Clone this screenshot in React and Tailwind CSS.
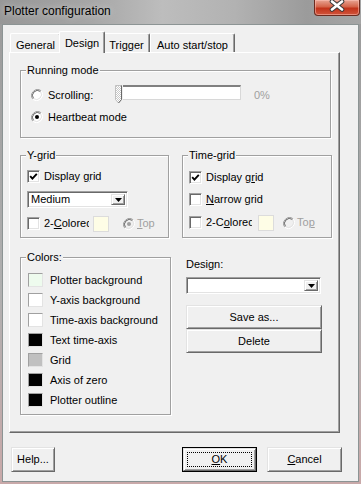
const raised =
  'bg-[#f0f0f0] border border-t-[#e3e3e3] border-l-[#e3e3e3] border-r-[#696969] border-b-[#696969] shadow-[inset_1px_1px_0_#fff,inset_-1px_-1px_0_#a0a0a0]';
const sunken =
  'border border-t-[#a0a0a0] border-l-[#a0a0a0] border-r-white border-b-white shadow-[inset_1px_1px_0_#696969,inset_-1px_-1px_0_#e3e3e3]';
const group = 'relative border border-[#a0a0a0] shadow-[1px_1px_0_#fff,inset_1px_1px_0_#fff]';

const Check = ({ checked }) => (
  <div className={`w-[13px] h-[13px] shrink-0 bg-white flex items-center justify-center ${sunken}`}>
    {checked && (
      <svg width="9" height="9" viewBox="0 0 9 9">
        <path d="M1.2 4.2 L3.4 6.6 L7.8 1.8" fill="none" stroke="#000" strokeWidth="1.9" />
      </svg>
    )}
  </div>
);

const Radio = ({ on, disabled }) => (
  <svg width="12" height="12" viewBox="0 0 12 12" className="shrink-0">
    <circle cx="6" cy="6" r="5.5" fill={disabled ? '#f0f0f0' : '#fff'} />
    <path d="M1.8 10.2 A6 6 0 0 1 10.2 1.8" fill="none" stroke="#a0a0a0" strokeWidth="1" />
    <path d="M2.5 9.5 A5 5 0 0 1 9.5 2.5" fill="none" stroke="#696969" strokeWidth="1" />
    <path d="M10.2 1.8 A6 6 0 0 1 1.8 10.2" fill="none" stroke="#fff" strokeWidth="1" />
    <path d="M9.5 2.5 A5 5 0 0 1 2.5 9.5" fill="none" stroke="#e3e3e3" strokeWidth="1" />
    {on && <circle cx="6" cy="6" r="2" fill={disabled ? '#a0a0a0' : '#000'} />}
  </svg>
);

const Arrow = () => (
  <div className={`w-[14px] h-full shrink-0 flex items-center justify-center ${raised}`}>
    <svg width="7" height="4" viewBox="0 0 7 4">
      <path d="M0 0H7L3.5 4Z" fill="#000" />
    </svg>
  </div>
);

const Combo = ({ w, text }) => (
  <div className={`h-[17px] flex items-stretch bg-white p-[2px] ${sunken}`} style={{ width: w }}>
    <span className="flex-1 leading-[11px] pl-[1px]">{text}</span>
    <Arrow />
  </div>
);

const Btn = ({ w, h, children }) => (
  <div className={`flex items-center justify-center ${raised}`} style={{ width: w, height: h }}>
    {children}
  </div>
);

const colors = [
  ['#eefbee', 'Plotter background'],
  ['#ffffff', 'Y-axis background'],
  ['#ffffff', 'Time-axis background'],
  ['#000000', 'Text time-axis'],
  ['#c0c0c0', 'Grid'],
  ['#000000', 'Axis of zero'],
  ['#000000', 'Plotter outline'],
];

const tabs = [
  ['General', 51],
  ['Design', 46],
  ['Trigger', 47],
  ['Auto start/stop', 85],
];

export default function App() {
  return (
    <div className="w-[361px] h-[484px] overflow-hidden bg-[linear-gradient(180deg,#9a9a9a,#b0b0b0_60%,#c9a9a9)] font-['Liberation_Sans',Arial,sans-serif] text-[11px] text-black">
      {/* title bar */}
      <div className="h-[24px] flex items-start bg-[linear-gradient(90deg,#979797,#a6a6a6_25%,#bdbdbd_45%,#b2b2b2_65%,#9b9b9b_85%,#a5a5a5)]">
        <span className="mt-[4px] ml-[4px] text-[12px] leading-[15px] [text-shadow:0_0_6px_#d8d8d8]">Plotter configuration</span>
        <div className="ml-auto mr-[1px] w-[46px] h-[16px] rounded-b-[4px] border border-t-0 border-[#6b2a1e] bg-[linear-gradient(180deg,#e8a493,#d4644a_45%,#c2331a_55%,#d0553c)] shadow-[inset_0_0_0_1px_rgba(255,200,190,0.5)] flex justify-center">
          <svg width="16" height="12" viewBox="0 0 16 12">
            <path d="M3 1.5 L13 9.5 M13 1.5 L3 9.5" stroke="#3a3a3a" strokeWidth="4.6" strokeLinecap="round" />
            <path d="M3 1.5 L13 9.5 M13 1.5 L3 9.5" stroke="#fff" strokeWidth="2.6" strokeLinecap="round" />
          </svg>
        </div>
      </div>

      {/* client area */}
      <div className="ml-[2px] w-[357px] h-[458px] border border-[#8c9494] bg-[#f0f0f0] flex flex-col">
        <div className="mt-[6px] pl-[7px] h-[21px] flex items-end">
          {tabs.map(([t, w]) =>
            t === 'Design' ? (
              <div
                key={t}
                className="relative z-10 -mx-[2px] -mb-px h-[22px] bg-[#f0f0f0] border-t border-l border-white border-r border-r-[#696969] rounded-t-[2px] shadow-[inset_-1px_0_0_#a0a0a0] flex justify-center pt-[3px]"
                style={{ width: w }}
              >
                {t}
              </div>
            ) : (
              <div
                key={t}
                className="h-[19px] border-t border-l border-white border-r border-r-[#696969] rounded-t-[2px] shadow-[inset_-1px_0_0_#a0a0a0] flex justify-center pt-[3px]"
                style={{ width: w }}
              >
                {t}
              </div>
            )
          )}
        </div>

        {/* tab panel */}
        <div className="ml-[6px] w-[331px] h-[381px] border-t border-l border-white border-r border-b border-r-[#696969] border-b-[#696969] shadow-[inset_-1px_-1px_0_#a0a0a0] flex flex-col">
          <div className={`mt-[17px] ml-[10px] w-[311px] h-[68px] pl-[10px] pt-[14px] ${group}`}>
            <span className="absolute -top-[7px] left-[5px] px-px leading-[13px] bg-[#f0f0f0]">Running mode</span>
            <div className="h-[20px] flex items-center">
              <Radio />
              <span className="ml-[5px] w-[67px]">Scrolling:</span>
              <div className="self-start flex h-[18px]">
                <svg width="8" height="19" viewBox="0 0 8 19">
                  <defs>
                    <pattern id="dots" width="2" height="2" patternUnits="userSpaceOnUse">
                      <rect width="2" height="2" fill="#fff" />
                      <rect width="1" height="1" fill="#c8c8c8" />
                      <rect x="1" y="1" width="1" height="1" fill="#c8c8c8" />
                    </pattern>
                  </defs>
                  <path d="M0.5 0.5H6.5V14.5L3.5 18L0.5 14.5Z" fill="url(#dots)" stroke="#c0c0c0" />
                  <path d="M6.5 0.5V14.5L3.5 18" fill="none" stroke="#696969" />
                </svg>
                <div className="w-[118px] h-[15px] bg-white border-t-2 border-t-[#808080] border-r border-b border-r-[#d8d8d8] border-b-[#d8d8d8]" />
              </div>
              <span className="ml-[13px] text-[#a0a0a0]">0%</span>
            </div>
            <div className="mt-[2px] h-[20px] flex items-center">
              <Radio on />
              <span className="ml-[5px]">Heartbeat mode</span>
            </div>
          </div>

          <div className="mt-[17px] ml-[10px] flex">
            <div className={`w-[149px] h-[83px] pl-[6px] pt-[14px] flex flex-col ${group}`}>
              <span className="absolute -top-[7px] left-[5px] px-px leading-[13px] bg-[#f0f0f0]">Y-grid</span>
              <div className="h-[13px] flex items-center">
                <Check checked />
                <span className="ml-[4px]">Display <u>g</u>rid</span>
              </div>
              <div className="mt-[8px]">
                <Combo w={101} text="Medium" />
              </div>
              <div className="mt-[9px] h-[13px] flex items-center">
                <Check />
                <span className="ml-[4px] w-[45px] overflow-hidden whitespace-nowrap">2-<u>C</u>olored</span>
                <div className="ml-[4px] w-[16px] h-[16px] bg-[#fefde6] border border-[#dcdcdc]" />
                <div className="ml-[14px]"><Radio on disabled /></div>
                <span className="ml-[2px] text-[#a0a0a0]"><u>T</u>op</span>
              </div>
            </div>

            <div className={`ml-[13px] w-[150px] h-[83px] pl-[6px] pt-[15px] flex flex-col ${group}`}>
              <span className="absolute -top-[7px] left-[5px] px-px leading-[13px] bg-[#f0f0f0]">Time-grid</span>
              <div className="h-[13px] flex items-center">
                <Check checked />
                <span className="ml-[4px]">Display g<u>r</u>id</span>
              </div>
              <div className="mt-[9px] h-[13px] flex items-center">
                <Check />
                <span className="ml-[4px]"><u>N</u>arrow grid</span>
              </div>
              <div className="mt-[10px] h-[13px] flex items-center">
                <Check />
                <span className="ml-[4px] w-[46px] overflow-hidden whitespace-nowrap">2-C<u>o</u>lored</span>
                <div className="ml-[6px] w-[16px] h-[16px] bg-[#fefde6] border border-[#dcdcdc]" />
                <div className="ml-[9px]"><Radio disabled /></div>
                <span className="ml-[2px] text-[#a0a0a0]">To<u>p</u></span>
              </div>
            </div>
          </div>

          <div className="mt-[19px] ml-[10px] flex items-start">
            <div className={`w-[151px] h-[158px] pl-[7px] pt-[12px] ${group}`}>
              <span className="absolute -top-[7px] left-[5px] px-px leading-[13px] bg-[#f0f0f0]">Colors:</span>
              {colors.map(([c, label]) => (
                <div key={label} className="h-[20px] flex items-center">
                  <div
                    className="w-[15px] h-[14px] border border-t-[#a0a0a0] border-l-[#a0a0a0] border-r-[#e3e3e3] border-b-[#e3e3e3]"
                    style={{ background: c }}
                  />
                  <span className="ml-[7px]">{label}</span>
                </div>
              ))}
            </div>

            <div className="ml-[15px] w-[136px] flex flex-col">
              <span className="leading-[13px] mt-[1px]">Design:</span>
              <div className="mt-[6px]">
                <Combo w={135} text="" />
              </div>
              <div className="mt-[11px]">
                <Btn w={136} h={24}>Save as...</Btn>
                <Btn w={136} h={24}>Delete</Btn>
              </div>
            </div>
          </div>
        </div>

        {/* dialog buttons */}
        <div className="mt-[14px] pl-[8px] flex">
          <Btn w={44} h={25}>Help...</Btn>
          <div className="ml-[127px] w-[75px] h-[25px] border border-black">
            <div className={`w-full h-full p-[3px] ${raised}`}>
              <div className="w-full h-full border border-dotted border-black flex items-center justify-center">
                <span><u>O</u>K</span>
              </div>
            </div>
          </div>
          <div className="ml-[10px]">
            <Btn w={75} h={25}><span><u>C</u>ancel</span></Btn>
          </div>
        </div>
      </div>
    </div>
  );
}
